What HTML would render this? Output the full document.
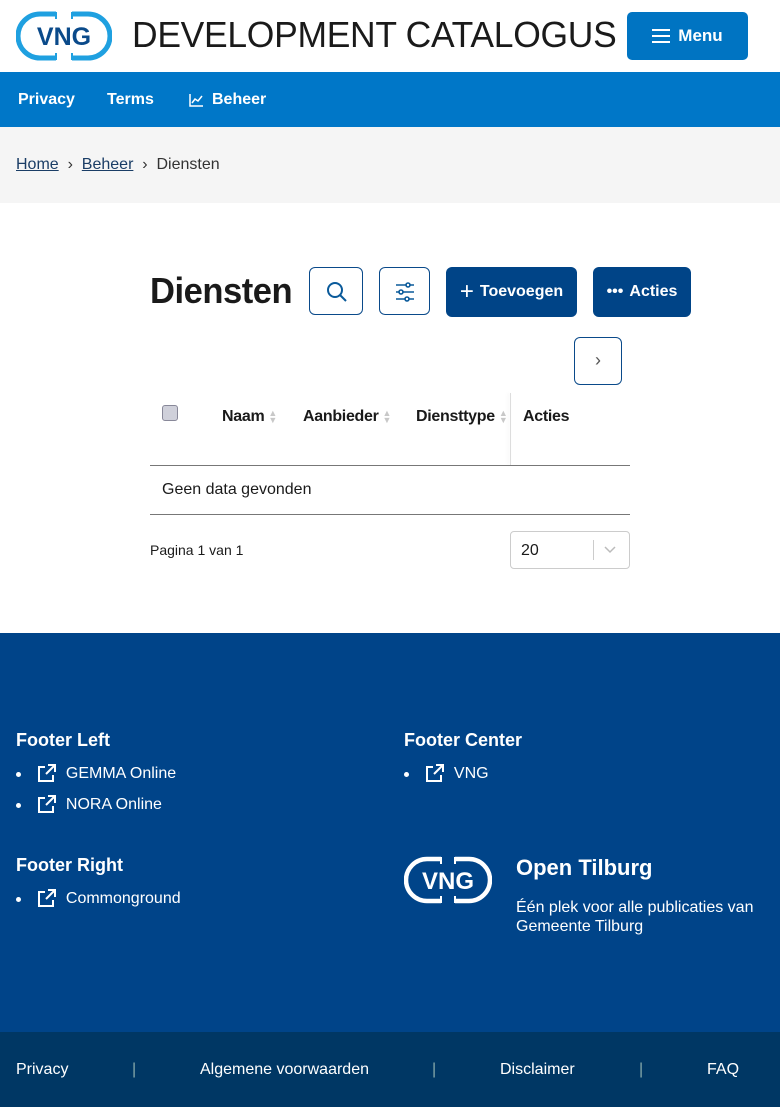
<!DOCTYPE html>
<html><head><meta charset="utf-8"><style>
*{box-sizing:border-box;margin:0;padding:0}
body{width:780px;height:1107px;font-family:"Liberation Sans",sans-serif;background:#fff;color:#1a1a1a;overflow:hidden;position:relative}
.abs{position:absolute}
.title{left:132px;top:14px;font-size:36px;color:#1a1a1a;letter-spacing:-0.3px;transform:scaleX(0.985);transform-origin:left;white-space:nowrap}
.menu{left:627px;top:12px;width:121px;height:48px;background:#0074c2;border-radius:5px;color:#fff;font-weight:bold;font-size:17px;display:flex;align-items:center;justify-content:center;gap:8px;z-index:2}
.nav{top:72px;left:0;width:780px;height:55px;background:#0077c8;color:#fff;font-weight:bold;font-size:16px}
.nav span{position:absolute;top:19px}
.bc{top:127px;left:0;width:780px;height:76px;background:#f5f5f5;font-size:16px;color:#333}
.bc a{color:#1a3d66;text-decoration:underline}
.btn{border:1px solid #0a4a8a;border-radius:6px;background:#fff}
.dbtn{background:#004487;border-radius:6px;color:#fff;font-weight:bold;font-size:16px;display:flex;align-items:center;justify-content:center;gap:6px}
.th{top:408px;font-weight:bold;font-size:16px;letter-spacing:-0.3px}
.sort{display:inline-block;width:9px;vertical-align:middle;margin-left:4px;color:#c8c8c8;font-size:9px;line-height:7px}
.foot{top:633px;left:0;width:780px;height:399px;background:#004489;color:#fff}
.foot h4{position:absolute;font-size:18px;font-weight:bold}
.li{position:absolute;font-size:16px;display:flex;align-items:center}
.li:before{content:"";width:5px;height:5px;background:#fff;border-radius:50%;position:absolute;left:-21px;top:8px}
.bot{top:1032px;left:0;width:780px;height:75px;background:#003764;color:#fff;font-size:16px}
.bot span{position:absolute;top:29px}
.sep{color:#8aa}
</style></head><body>
<svg class="abs" style="left:16px;top:11px" width="96" height="50" viewBox="0 0 96 50">
<path d="M40 3 H24 A21 21 0 0 0 24 47 H40" fill="none" stroke="#1fa0e0" stroke-width="5"/>
<path d="M56 3 H72 A21 21 0 0 1 72 47 H56" fill="none" stroke="#1fa0e0" stroke-width="5"/>
<path d="M40 1V8M56 1V8M40 42V49M56 42V49" stroke="#1fa0e0" stroke-width="2"/>
<text x="48" y="34" text-anchor="middle" font-family="Liberation Sans" font-weight="bold" font-size="25" fill="#0a4a8a">VNG</text>
</svg>
<div class="abs title">DEVELOPMENT CATALOGUS</div>
<div class="abs menu"><svg width="18" height="14"><path d="M0 1H18M0 7H18M0 13H18" stroke="#fff" stroke-width="2"/></svg>Menu</div>
<div class="abs nav"><span style="left:18px">Privacy</span><span style="left:107px">Terms</span>
<svg style="position:absolute;left:189px;top:22px" width="14" height="13"><path d="M1 0V12H14M3 9L6 5L9 7L13 2" fill="none" stroke="#fff" stroke-width="1.5"/></svg>
<span style="left:212px">Beheer</span></div>
<div class="abs bc"><div style="position:absolute;left:16px;top:29px"><a>Home</a> &nbsp;›&nbsp; <a>Beheer</a> &nbsp;›&nbsp; Diensten</div></div>

<div class="abs" style="left:150px;top:270px;font-size:36px;font-weight:bold;color:#1a1a1a;letter-spacing:-0.5px;transform:scaleX(0.96);transform-origin:left">Diensten</div>
<div class="abs btn" style="left:309px;top:267px;width:54px;height:48px"><svg style="position:absolute;left:16px;top:13px" width="22" height="22"><circle cx="9" cy="9" r="7" fill="none" stroke="#0a5a9a" stroke-width="2"/><path d="M14 14L20 20" stroke="#0a5a9a" stroke-width="2"/></svg></div>
<div class="abs btn" style="left:379px;top:267px;width:51px;height:48px"><svg style="position:absolute;left:15px;top:14px" width="20" height="20"><g stroke="#0a5a9a" stroke-width="1.6" fill="#fff"><path d="M1 3H19M1 10H19M1 17H19"/><circle cx="13" cy="3" r="2"/><circle cx="6" cy="10" r="2"/><circle cx="12" cy="17" r="2"/></g></svg></div>
<div class="abs dbtn" style="left:446px;top:267px;width:131px;height:50px"><span style="font-size:24px;font-weight:normal">+</span>Toevoegen</div>
<div class="abs dbtn" style="left:593px;top:267px;width:98px;height:50px"><span>•••</span>Acties</div>
<div class="abs btn" style="left:574px;top:337px;width:48px;height:48px;color:#555;text-align:center;line-height:44px;font-size:18px">›</div>

<div class="abs" style="left:162px;top:405px;width:16px;height:16px;border:1px solid #889;border-radius:3px;background:#cfd0da"></div>
<div class="abs th" style="left:222px">Naam<span class="sort">▲<br>▼</span></div>
<div class="abs th" style="left:303px">Aanbieder<span class="sort">▲<br>▼</span></div>
<div class="abs th" style="left:416px">Diensttype<span class="sort">▲<br>▼</span></div>
<div class="abs" style="left:510px;top:393px;width:1px;height:72px;background:#ddd;box-shadow:-2px 0 3px rgba(0,0,0,.08)"></div>
<div class="abs th" style="left:523px">Acties</div>
<div class="abs" style="left:150px;top:465px;width:480px;height:1px;background:#777"></div>
<div class="abs" style="left:162px;top:481px;font-size:16px">Geen data gevonden</div>
<div class="abs" style="left:150px;top:514px;width:480px;height:1px;background:#777"></div>
<div class="abs" style="left:150px;top:542px;font-size:14px">Pagina 1 van 1</div>
<div class="abs" style="left:510px;top:531px;width:120px;height:38px;border:1px solid #ccc;border-radius:4px"><span style="position:absolute;left:10px;top:10px;font-size:16px">20</span><div style="position:absolute;left:82px;top:8px;width:1px;height:20px;background:#ccc"></div><svg style="position:absolute;left:93px;top:14px" width="12" height="8"><path d="M1 1L6 6L11 1" fill="none" stroke="#bbb" stroke-width="1.5"/></svg></div>

<div class="abs foot">
<h4 style="left:16px;top:97px">Footer Left</h4>
<h4 style="left:404px;top:97px">Footer Center</h4>
<h4 style="left:16px;top:222px">Footer Right</h4>
<div class="li" style="left:37px;top:131px"><svg width="20" height="20"><path d="M8 3H2V17H16V11M11 1H18V8M18 1L9 10" fill="none" stroke="#fff" stroke-width="2"/></svg>&nbsp;&nbsp;GEMMA Online</div>
<div class="li" style="left:37px;top:162px"><svg width="20" height="20"><path d="M8 3H2V17H16V11M11 1H18V8M18 1L9 10" fill="none" stroke="#fff" stroke-width="2"/></svg>&nbsp;&nbsp;NORA Online</div>
<div class="li" style="left:37px;top:256px"><svg width="20" height="20"><path d="M8 3H2V17H16V11M11 1H18V8M18 1L9 10" fill="none" stroke="#fff" stroke-width="2"/></svg>&nbsp;&nbsp;Commonground</div>
<div class="li" style="left:425px;top:131px"><svg width="20" height="20"><path d="M8 3H2V17H16V11M11 1H18V8M18 1L9 10" fill="none" stroke="#fff" stroke-width="2"/></svg>&nbsp;&nbsp;VNG</div>
<svg style="position:absolute;left:404px;top:223px" width="88" height="48" viewBox="0 0 88 48">
<path d="M37 3H23A20 20 0 0 0 23 45H37" fill="none" stroke="#fff" stroke-width="4.5"/>
<path d="M51 3H65A20 20 0 0 1 65 45H51" fill="none" stroke="#fff" stroke-width="4.5"/>
<path d="M37 1V8M51 1V8M37 40V47M51 40V47" stroke="#fff" stroke-width="2"/>
<text x="44" y="33" text-anchor="middle" font-family="Liberation Sans" font-weight="bold" font-size="24" fill="#fff">VNG</text></svg>
<div style="position:absolute;left:516px;top:222px;font-size:22px;font-weight:bold">Open Tilburg</div>
<div style="position:absolute;left:516px;top:265px;font-size:16px;line-height:19px;width:250px">Één plek voor alle publicaties van Gemeente Tilburg</div>
</div>
<div class="abs bot"><span style="left:16px">Privacy</span><span class="sep" style="left:132px">|</span><span style="left:200px">Algemene voorwaarden</span><span class="sep" style="left:432px">|</span><span style="left:500px">Disclaimer</span><span class="sep" style="left:639px">|</span><span style="left:707px">FAQ</span></div>
</body></html>
